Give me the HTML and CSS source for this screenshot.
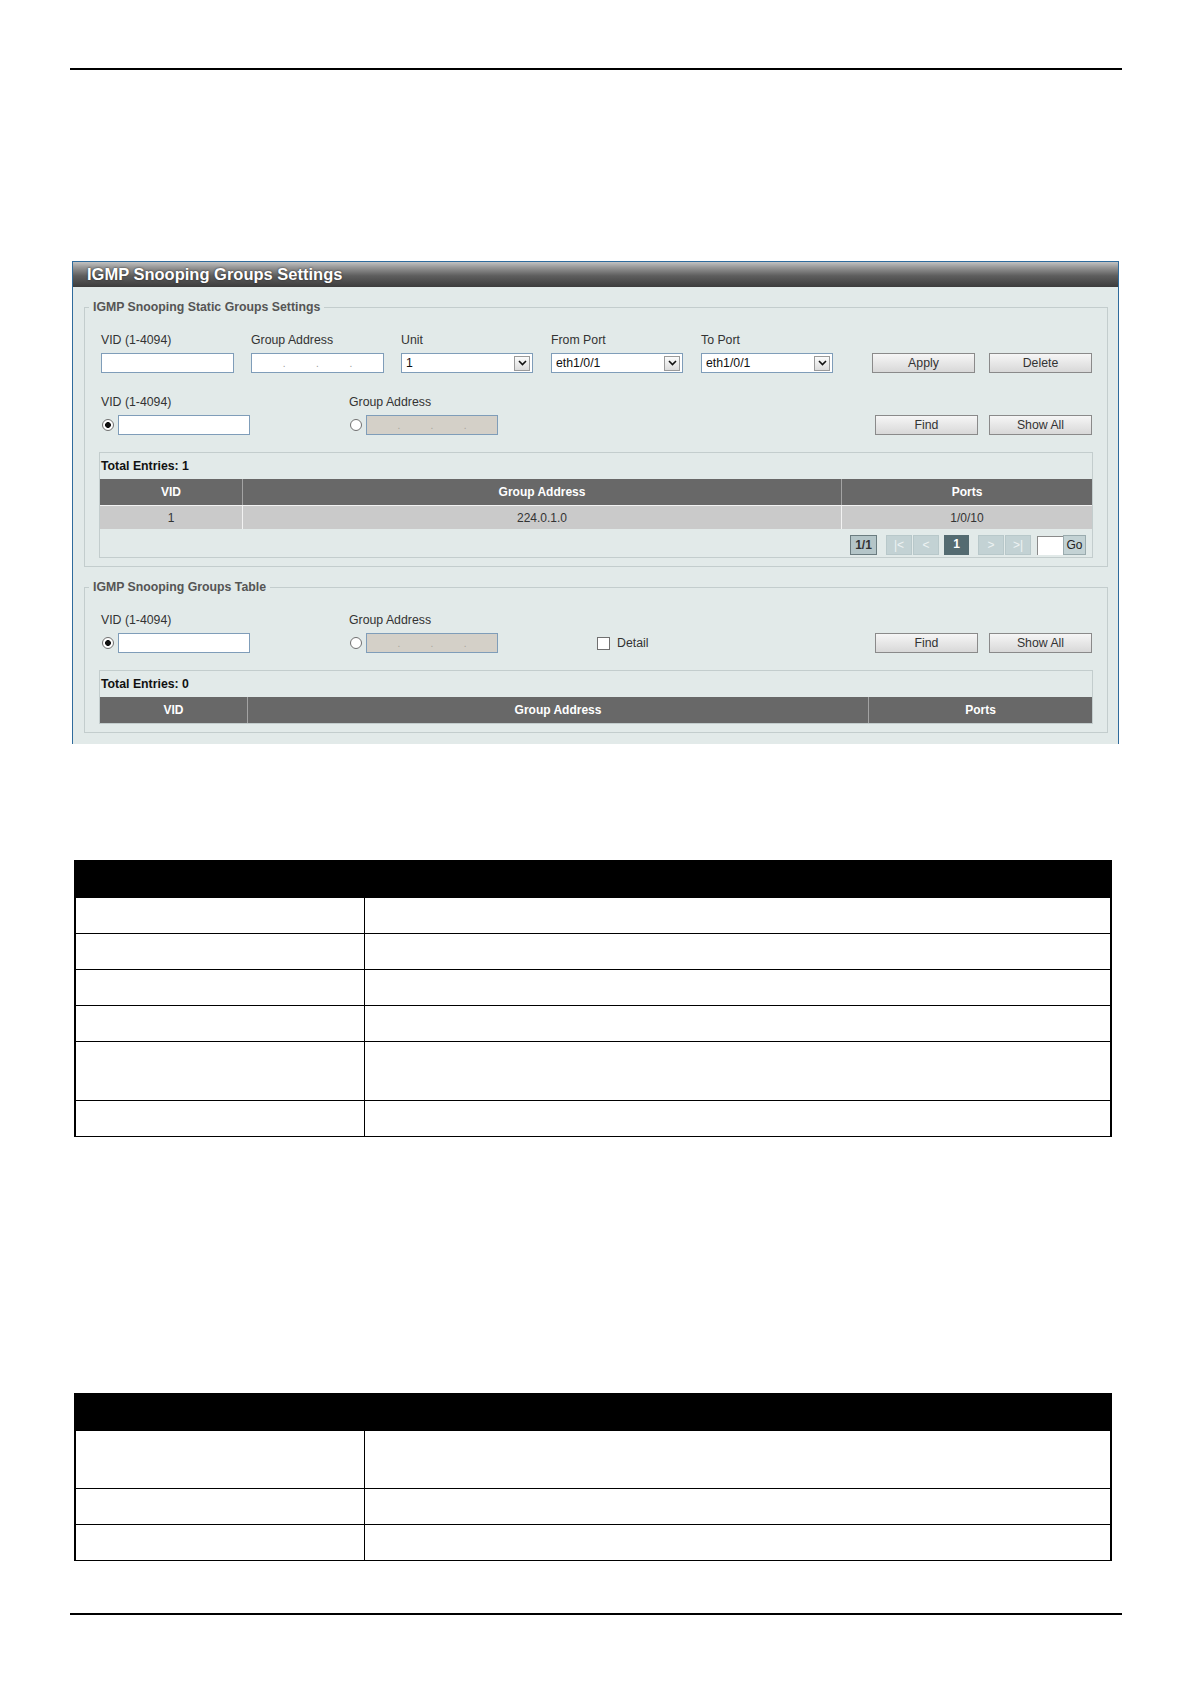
FILE: index.html
```html
<!DOCTYPE html>
<html lang="en">
<head>
  <meta charset="UTF-8" />
  <meta name="viewport" content="width=device-width, initial-scale=1.0" />
  <title>IGMP Snooping Groups Settings</title>
  <link rel="stylesheet" href="styles.css">
</head>
<body>
  <div class="page">
    <div class="rule"></div>

    <div class="panel">
      <div class="panel-title">IGMP Snooping Groups Settings</div>
      <div class="panel-body">

        <!-- static groups -->
        <fieldset class="group">
          <legend>IGMP Snooping Static Groups Settings</legend>
          <div class="group-body">
            <div class="form-row">
              <div class="field">
                <label>VID (1-4094)</label>
                <input type="text" class="text-box">
              </div>
              <div class="field">
                <label>Group Address</label>
                <div class="ip-box"><span>.</span><span>.</span><span>.</span></div>
              </div>
              <div class="field">
                <label>Unit</label>
                <div class="select-box">
                  <span>1</span>
                  <i class="arrow"><svg width="9" height="6" viewBox="0 0 9 6"><polyline points="1,1 4.5,4.5 8,1" fill="none" stroke="#111" stroke-width="1.6"/></svg></i>
                </div>
              </div>
              <div class="field">
                <label>From Port</label>
                <div class="select-box">
                  <span>eth1/0/1</span>
                  <i class="arrow"><svg width="9" height="6" viewBox="0 0 9 6"><polyline points="1,1 4.5,4.5 8,1" fill="none" stroke="#111" stroke-width="1.6"/></svg></i>
                </div>
              </div>
              <div class="field">
                <label>To Port</label>
                <div class="select-box">
                  <span>eth1/0/1</span>
                  <i class="arrow"><svg width="9" height="6" viewBox="0 0 9 6"><polyline points="1,1 4.5,4.5 8,1" fill="none" stroke="#111" stroke-width="1.6"/></svg></i>
                </div>
              </div>
              <div class="actions">
                <button class="btn">Apply</button>
                <button class="btn">Delete</button>
              </div>
            </div>

            <div class="form-row second">
              <div class="field wide">
                <label>VID (1-4094)</label>
                <div class="pick">
                  <span class="radio checked"></span>
                  <input type="text" class="text-box short">
                </div>
              </div>
              <div class="field wide">
                <label>Group Address</label>
                <div class="pick">
                  <span class="radio"></span>
                  <div class="ip-box short disabled"><span>.</span><span>.</span><span>.</span></div>
                </div>
              </div>
              <div class="actions find">
                <button class="btn">Find</button>
                <button class="btn">Show All</button>
              </div>
            </div>

            <div class="result">
              <div class="total">Total Entries: 1</div>
              <table class="grid">
                <tr>
                  <th class="col-vid">VID</th>
                  <th>Group Address</th>
                  <th class="col-ports">Ports</th>
                </tr>
                <tr>
                  <td>1</td>
                  <td>224.0.1.0</td>
                  <td>1/0/10</td>
                </tr>
              </table>
              <div class="pager">
                <span class="pg pg-count">1/1</span>
                <span class="pg pg-off">|&lt;</span>
                <span class="pg pg-off">&lt;</span>
                <span class="pg pg-cur">1</span>
                <span class="pg pg-off">&gt;</span>
                <span class="pg pg-off">&gt;|</span>
                <span class="pg pg-input"></span>
                <span class="pg pg-go">Go</span>
              </div>
            </div>
          </div>
        </fieldset>

        <!-- groups table -->
        <fieldset class="group">
          <legend>IGMP Snooping Groups Table</legend>
          <div class="group-body">
            <div class="form-row">
              <div class="field wide">
                <label>VID (1-4094)</label>
                <div class="pick">
                  <span class="radio checked"></span>
                  <input type="text" class="text-box short">
                </div>
              </div>
              <div class="field wide">
                <label>Group Address</label>
                <div class="pick">
                  <span class="radio"></span>
                  <div class="ip-box short disabled"><span>.</span><span>.</span><span>.</span></div>
                </div>
              </div>
              <div class="check">
                <span class="checkbox"></span>
                <span>Detail</span>
              </div>
              <div class="actions find">
                <button class="btn">Find</button>
                <button class="btn">Show All</button>
              </div>
            </div>

            <div class="result">
              <div class="total">Total Entries: 0</div>
              <table class="grid groups">
                <tr>
                  <th class="col-vid">VID</th>
                  <th>Group Address</th>
                  <th class="col-ports">Ports</th>
                </tr>
              </table>
            </div>
          </div>
        </fieldset>

      </div>
    </div>

    <table class="doc-table">
      <tr class="head"><th></th><th></th></tr>
      <tr><td></td><td></td></tr>
      <tr><td></td><td></td></tr>
      <tr><td></td><td></td></tr>
      <tr><td></td><td></td></tr>
      <tr class="tall"><td></td><td></td></tr>
      <tr><td></td><td></td></tr>
    </table>

    <table class="doc-table second">
      <tr class="head"><th></th><th></th></tr>
      <tr class="tall"><td></td><td></td></tr>
      <tr><td></td><td></td></tr>
      <tr><td></td><td></td></tr>
    </table>

    <div class="rule bottom"></div>
  </div>
</body>
</html>
```

FILE: styles.css
```css
body {
  margin: 0;
  background: #fff;
  font-family: "Liberation Sans", Arial, sans-serif;
  font-size: 12.3px;
  color: #333;
}
.page {
  padding: 68px 70px 0;
}
.rule {
  height: 2px;
  background: #000;
}
.rule.bottom {
  margin-top: 52px;
}

/* settings panel */
.panel {
  margin: 191px 3px 0 2px;
  background: #e2eae9;
  border: 1px solid #2f6b9c;
  border-bottom: none;
  padding-bottom: 11px;
}
.panel-title {
  height: 25px;
  line-height: 24px;
  padding-left: 14px;
  color: #fff;
  font-size: 16.5px;
  font-weight: bold;
  text-shadow: 0 0 2px #222;
  background: linear-gradient(to bottom, #c2c2c2 0%, #969696 22%, #5e5e5e 55%, #3c3c3c 100%);
}
.panel-body {
  padding: 13px 10px 0 11px;
}
.group {
  margin: 0;
  padding: 0;
  min-width: 0;
  border: 1px solid #c3cdcd;
}
.group + .group {
  margin-top: 13px;
}
.group legend {
  margin-left: 4px;
  padding: 0 4px;
  line-height: 14px;
  font-weight: bold;
  color: #555;
}
.group-body {
  padding: 19px 14px 8px;
}

/* form rows */
.form-row {
  display: flex;
  align-items: flex-end;
  padding: 0 1px 0 2px;
}
.form-row.second {
  margin-top: 22px;
}
.field {
  width: 150px;
}
.field.wide {
  width: 248px;
}
.field label {
  display: block;
  line-height: 14px;
  margin-bottom: 6px;
}
.text-box {
  display: block;
  box-sizing: border-box;
  width: 133px;
  height: 20px;
  margin: 0;
  padding: 0 3px;
  border: 1px solid #7f9db9;
  background: #fff;
  font: inherit;
}
.text-box.short {
  width: 132px;
}
.ip-box {
  box-sizing: border-box;
  width: 133px;
  height: 20px;
  border: 1px solid #7f9db9;
  background: #fff;
  display: flex;
  justify-content: space-evenly;
  align-items: center;
  color: #9a9a9a;
  font-size: 10px;
}
.ip-box.short {
  width: 132px;
}
.ip-box.disabled {
  background: #d4d0c8;
  color: #a8a49c;
}
.select-box {
  box-sizing: border-box;
  width: 132px;
  height: 20px;
  border: 1px solid #7f9db9;
  background: #fff;
  display: flex;
  align-items: center;
  justify-content: space-between;
  padding: 0 2px 0 4px;
  color: #111;
}
.select-box .arrow {
  box-sizing: border-box;
  width: 16px;
  height: 15px;
  border: 1px solid #9a9a9a;
  background: linear-gradient(to bottom, #fbfbfb, #dcdcdc);
  display: flex;
  align-items: center;
  justify-content: center;
}
.pick {
  display: flex;
  align-items: center;
}
.radio {
  box-sizing: border-box;
  width: 12px;
  height: 12px;
  margin: 0 4px 0 1px;
  border: 1px solid #707070;
  border-radius: 50%;
  background: #fff;
}
.radio.checked {
  background: radial-gradient(circle, #111 0 2.6px, #fff 3.2px);
}
.check {
  display: flex;
  align-items: center;
  height: 20px;
}
.checkbox {
  box-sizing: border-box;
  width: 13px;
  height: 13px;
  margin-right: 7px;
  border: 1px solid #707070;
  background: #fff;
}
.actions {
  display: flex;
  gap: 14px;
  margin-left: auto;
}
.actions.find {
  gap: 11px;
}
.btn {
  box-sizing: border-box;
  width: 103px;
  height: 20px;
  padding: 0;
  border: 1px solid #8a8a8a;
  background: linear-gradient(to bottom, #f6f6f6, #d8d8d8);
  font: inherit;
  color: #333;
}

/* result box */
.result {
  margin-top: 17px;
  border: 1px solid #c3cdcd;
}
.total {
  height: 26px;
  line-height: 26px;
  padding-left: 1px;
  font-weight: bold;
  color: #111;
}
.grid {
  width: 100%;
  table-layout: fixed;
  border-spacing: 0;
  font-size: 12px;
}
.grid th {
  height: 26px;
  padding: 0;
  background: #686868;
  color: #fff;
  font-weight: bold;
}
.grid td {
  box-sizing: border-box;
  height: 24px;
  padding: 0;
  background: #cacaca;
  border-top: 1px solid #f2f2f2;
  text-align: center;
  color: #333;
}
.grid th + th {
  border-left: 1px solid #a3a3a3;
}
.grid td + td {
  border-left: 1px solid #f2f2f2;
}
.grid .col-vid {
  width: 142px;
}
.grid .col-ports {
  width: 250px;
}
.grid.groups .col-vid {
  width: 147px;
}
.grid.groups .col-ports {
  width: 223px;
}

/* paging */
.pager {
  display: flex;
  justify-content: flex-end;
  align-items: center;
  padding: 6px 6px 2px 0;
  font-size: 12px;
}
.pg {
  box-sizing: border-box;
  height: 20px;
  line-height: 18px;
  text-align: center;
}
.pg-count {
  width: 27px;
  margin-right: 8px;
  border: 1px solid #6b7c80;
  background: #b4c5c8;
  font-weight: bold;
  color: #333;
}
.pg-off {
  width: 26px;
  margin-left: 1px;
  border: 1px solid #b8c8ca;
  background: #c3d2d4;
  color: #eef3f3;
}
.pg-cur {
  width: 25px;
  margin: 0 8px 0 5px;
  background: #546b71;
  color: #fff;
  font-weight: bold;
}
.pg-input {
  width: 26px;
  height: 19px;
  margin-left: 6px;
  border-top: 1px solid #8a8a8a;
  border-left: 1px solid #8a8a8a;
  background: #fff;
}
.pg-go {
  width: 23px;
  border: 1px solid #9aabae;
  background: #c3d2d4;
  color: #222;
}

/* parameter tables */
.doc-table {
  width: 1038px;
  margin: 116px 0 0 4px;
  border-collapse: collapse;
}
.doc-table.second {
  margin-top: 256px;
}
.doc-table tr {
  height: 36px;
}
.doc-table tr.head {
  height: 37px;
}
.doc-table tr.tall {
  height: 59px;
}
.doc-table.second tr.tall {
  height: 58px;
}
.doc-table th {
  padding: 0;
  background: #000;
  border: 1px solid #000;
}
.doc-table td {
  padding: 0;
  border: 1px solid #000;
}
.doc-table td:first-child,
.doc-table th:first-child {
  width: 288px;
  border-left-width: 2px;
}
.doc-table td:last-child,
.doc-table th:last-child {
  border-right-width: 2px;
}
```
